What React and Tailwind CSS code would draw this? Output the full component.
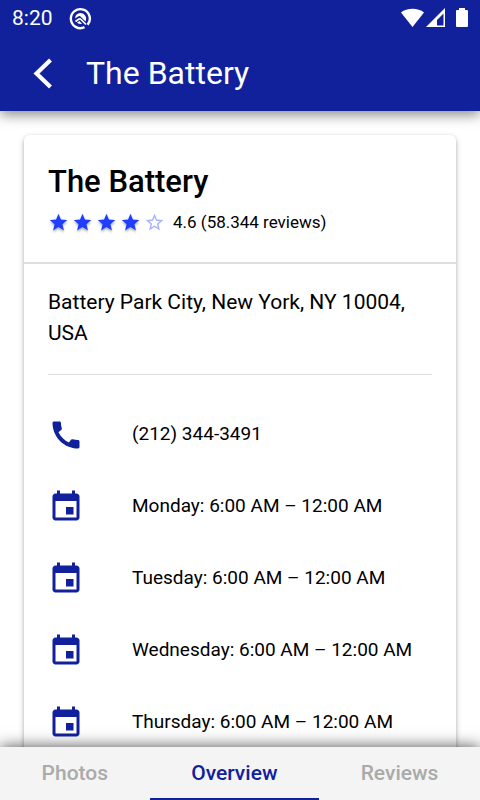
import React from 'react';

const contactRows = [
  { icon: 'phone', text: '(212) 344-3491' },
  { icon: 'calendar', text: 'Monday: 6:00 AM – 12:00 AM' },
  { icon: 'calendar', text: 'Tuesday: 6:00 AM – 12:00 AM' },
  { icon: 'calendar', text: 'Wednesday: 6:00 AM – 12:00 AM' },
  { icon: 'calendar', text: 'Thursday: 6:00 AM – 12:00 AM' },
];

const tabs = ['Photos', 'Overview', 'Reviews'];

const iconPaths = {
  phone: 'M20.01 15.38c-1.23 0-2.42-.2-3.53-.56a.977.977 0 0 0-1.01.24l-1.57 1.97c-2.83-1.35-5.48-3.9-6.89-6.83l1.95-1.66c.27-.28.35-.67.24-1.02-.37-1.11-.56-2.3-.56-3.53 0-.54-.45-.99-.99-.99H4.19C3.65 3 3 3.24 3 3.99 3 13.28 10.73 21 20.01 21c.71 0 .99-.63.99-1.18v-3.45c0-.54-.45-.99-.99-.99z',
  calendar: 'M17 12h-5v5h5v-5zM16 1v2H8V1H6v2H5c-1.11 0-1.99.9-1.99 2L3 19c0 1.1.89 2 2 2h14c1.1 0 2-.9 2-2V5c0-1.1-.9-2-2-2h-1V1h-2zm3 18H5V8h14v11z',
};

const RowIcon = ({ name }) => (
  <svg viewBox="0 0 24 24" className="w-9 h-9 shrink-0 fill-[#11219b]" aria-hidden="true">
    <path d={iconPaths[name]} />
  </svg>
);

const Star = ({ filled }) => (
  <svg
    viewBox="0 0 24 24"
    className={filled ? 'w-[21px] h-[21px] fill-[#1f3dff] drop-shadow-[0_2px_1px_rgba(0,0,0,0.3)]' : 'w-[21px] h-[21px] fill-[#a5b1ff]'}
    aria-hidden="true"
  >
    {filled ? (
      <path d="M12 17.27L18.18 21l-1.64-7.03L22 9.24l-7.19-.61L12 2 9.19 8.63 2 9.24l5.46 4.73L5.82 21z" />
    ) : (
      <path d="M22 9.24l-7.19-.62L12 2 9.19 8.63 2 9.24l5.46 4.73L5.82 21 12 17.27 18.18 21l-1.63-7.03L22 9.24zM12 15.4l-3.76 2.27 1-4.28-3.32-2.88 4.38-.38L12 6.1l1.71 4.04 4.38.38-3.32 2.88 1 4.28L12 15.4z" />
    )}
  </svg>
);

const StatusBar = () => (
  <div className="flex items-center justify-between h-9 px-3">
    <div className="flex items-center gap-4">
      <span className="text-[21px] leading-9">8:20</span>
      <svg viewBox="0 0 24 24" className="w-6 h-6" fill="none" aria-hidden="true">
        <path d="M15.500 21.200A9.500 9.500 0 1 1 18.600 18.800" stroke="currentColor" strokeWidth="2.400" />
        <path d="M6.500 10A5.700 5.700 0 1 1 16.500 15.500L11.500 10.500Q10.500 9.500 9 10.500L6.300 12.500z" fill="currentColor" />
        <path d="M6.500 15.500L10 13Q11 12.500 12 13.500L17 18.500" stroke="currentColor" strokeWidth="1.700" />
        <path d="M8 16.500Q10 18.500 13 18L10.500 15z" fill="currentColor" />
      </svg>
    </div>
    <svg viewBox="0 0 68 20" className="w-[68px] h-5 fill-current" aria-hidden="true">
      <path d="M1 4.500C7-.5 18-.5 24 4.500L12.500 19z" />
      <path fillRule="evenodd" d="M26 19L45 0v19zM37 17.500h6.500V5.500L37 12z" />
      <path d="M56 2h3V0h6v2h2q1 0 1 1v15q0 1-1 1H57q-1 0-1-1V3q0-1 1-1z" />
    </svg>
  </div>
);

const App = () => {
  return (
    <div className="h-screen flex flex-col bg-white text-black font-['Roboto',sans-serif]">
      <header className="relative z-10 shrink-0 bg-[#11219b] text-white shadow-[0_4px_12px_rgba(0,0,0,0.45)]">
        <StatusBar />
        <div className="flex items-center h-[75px] pl-6 gap-[26px]">
          <button type="button" aria-label="Back" className="w-9 h-9">
            <svg viewBox="0 0 36 36" className="w-9 h-9" fill="none" aria-hidden="true">
              <path d="M26.500 4L12.500 17.500 26.500 31" stroke="currentColor" strokeWidth="4.200" />
            </svg>
          </button>
          <h1 className="pb-0.5 text-[32px] leading-9">The Battery</h1>
        </div>
      </header>

      <main className="flex-1 min-h-0 overflow-y-auto p-6 [scrollbar-width:none]">
        <article className="rounded-md bg-white shadow-[0_2px_5px_rgba(0,0,0,0.35)]">
          <div className="px-6 pt-7 pb-7 border-b-2 border-[#dedede]">
            <h2 className="text-[31px] leading-[38px] font-medium">The Battery</h2>
            <div className="flex items-center mt-[9px] h-6 gap-2">
              <div className="flex gap-[3px]" role="img" aria-label="4.6 of 5 stars">
                {[1, 2, 3, 4, 5].map((n) => (
                  <Star key={n} filled={n < 5} />
                ))}
              </div>
              <span className="text-[17px] leading-6">4.6 (58.344 reviews)</span>
            </div>
          </div>
          <div className="px-6 pt-[23px]">
            <p className="pb-[25px] border-b border-[#dedede] text-[21px] leading-[31px]">
              Battery Park City, New York, NY 10004, USA
            </p>
          </div>
          <ul className="px-6 pt-6">
            {contactRows.map((row) => (
              <li key={row.text} className="flex items-center h-[72px] gap-12">
                <RowIcon name={row.icon} />
                <span className="pb-0.5 text-[19px] leading-6">{row.text}</span>
              </li>
            ))}
          </ul>
        </article>
      </main>

      <nav className="relative z-10 shrink-0 flex h-[53px] bg-[#f4f4f4] shadow-[0_0_15px_rgba(0,0,0,0.7)]">
        {tabs.map((tab) => (
          <button
            key={tab}
            type="button"
            aria-current={tab === 'Overview' ? 'page' : undefined}
            className={
              tab === 'Overview'
                ? 'flex-auto border-b-2 border-[#11219b] text-[21px] leading-6 font-medium text-[#11219b]'
                : 'flex-auto border-b-2 border-transparent text-[21px] leading-6 font-medium text-[#aaaaaa]'
            }
          >
            {tab}
          </button>
        ))}
      </nav>
    </div>
  );
};

export default App;
